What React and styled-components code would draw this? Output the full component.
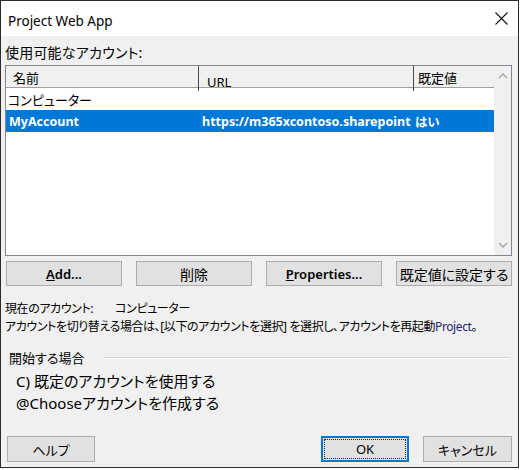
import styled, { createGlobalStyle } from 'styled-components';

const GlobalStyle = createGlobalStyle`
  html, body {
    margin: 0;
    padding: 0;
    background: #fff;
  }
  body {
    font-family: 'Noto Sans', 'Noto Sans CJK JP', sans-serif;
    font-feature-settings: 'palt';
    color: #000;
  }
  * {
    box-sizing: border-box;
  }
`;

const columns = '192px 215px 1fr';

const accounts = [
  { name: 'コンピューター', url: '', isDefault: '' },
  {
    name: 'MyAccount',
    url: 'https://m365xcontoso.sharepoint',
    isDefault: 'はい',
    selected: true,
  },
];

const Chevron = ({ up }) => (
  <svg width='10' height='6' viewBox='0 0 10 6'>
    <path
      d={up ? 'M1 5 L5 1 L9 5' : 'M1 1 L5 5 L9 1'}
      fill='none'
      stroke='#a6a6a6'
      strokeWidth='1.4'
    />
  </svg>
);

const App = () => {
  return (
    <>
      <GlobalStyle />
      <Window>
        <TitleBar>
          <Title>Project Web App</Title>
          <Close>
            <svg width='13' height='13' viewBox='0 0 13 13'>
              <path d='M0.5 0.5 L12.5 12.5 M12.5 0.5 L0.5 12.5' stroke='#111' strokeWidth='1.1' />
            </svg>
          </Close>
        </TitleBar>

        <Body>
          <SectionLabel>使用可能なアカウント:</SectionLabel>

          <ListBox>
            <ListMain>
              <HeaderRow>
                <HeaderCell $pl={7} $pt={3}>名前</HeaderCell>
                <HeaderCell $pl={8} $pt={7} $divider>URL</HeaderCell>
                <HeaderCell $pl={4} $pt={3} $divider>既定値</HeaderCell>
              </HeaderRow>
              {accounts.map((a) => (
                <Row key={a.name} $selected={a.selected}>
                  <Cell $pl={a.selected ? 3 : 2}>{a.name}</Cell>
                  <Cell $pl={4}>{a.url}</Cell>
                  <Cell $pl={2}>{a.isDefault}</Cell>
                </Row>
              ))}
            </ListMain>
            <ScrollBar>
              <Chevron up />
              <Chevron />
            </ScrollBar>
          </ListBox>

          <ButtonRow>
            <Button>
              <Latin>
                <u>A</u>dd...
              </Latin>
            </Button>
            <Button>削除</Button>
            <Button>
              <Latin>
                <u>P</u>roperties...
              </Latin>
            </Button>
            <Button>既定値に設定する</Button>
          </ButtonRow>

          <Info>
            <InfoLine>
              現在のアカウント:<Current>コンピューター</Current>
            </InfoLine>
            <InfoLine>
              アカウントを切り替える場合は、[以下のアカウントを選択] を選択し、アカウントを再起動
              <Product>Project</Product>。
            </InfoLine>
          </Info>

          <GroupHead>
            開始する場合
            <Etched />
          </GroupHead>

          <Options>
            <Option>C) 既定のアカウントを使用する</Option>
            <Option>@Chooseアカウントを作成する</Option>
          </Options>

          <Footer>
            <FooterButton>ヘルプ</FooterButton>
            <Spacer />
            <FooterButton $primary>OK</FooterButton>
            <FooterButton $wide>キャンセル</FooterButton>
          </Footer>
        </Body>
      </Window>
    </>
  );
};

export default App;

const Window = styled.div`
  width: 519px;
  height: 468px;
  border: 1px solid #2b2b2b;
  background: #f0f0f0;
  display: flex;
  flex-direction: column;
`;

const TitleBar = styled.div`
  height: 35px;
  background: #fff;
  display: flex;
  align-items: flex-start;
  justify-content: space-between;
  padding: 0 10px 0 7px;
`;

const Title = styled.div`
  padding-top: 10px;
  line-height: 20px;
  font-size: 13.5px;
`;

const Close = styled.div`
  margin-top: 11px;
  width: 13px;
  height: 13px;
  display: flex;
`;

const Body = styled.div`
  flex: 1;
  display: flex;
  flex-direction: column;
  padding: 0 6px 0 4px;
`;

const SectionLabel = styled.div`
  margin-top: 7px;
  line-height: 20px;
  font-size: 14px;
  letter-spacing: 0.2px;
`;

const ListBox = styled.div`
  margin-top: 2px;
  height: 191px;
  border: 1px solid #828790;
  background: #fff;
  display: grid;
  grid-template-columns: 1fr 17px;
`;

const ListMain = styled.div`
  display: flex;
  flex-direction: column;
`;

const HeaderRow = styled.div`
  display: grid;
  grid-template-columns: ${columns};
  height: 22px;
  background: #f0f0f0;
  border-bottom: 1px solid #a0a0a0;
`;

const HeaderCell = styled.div`
  padding-left: ${(p) => p.$pl}px;
  padding-top: ${(p) => p.$pt}px;
  line-height: 18px;
  font-size: 13px;
  border-left: ${(p) => (p.$divider ? '1px solid #4a4a4a' : 'none')};
`;

const Row = styled.div`
  display: grid;
  grid-template-columns: ${columns};
  height: 22px;
  align-items: center;
  font-size: ${(p) => (p.$selected ? '12.5px' : '13px')};
  background: ${(p) => (p.$selected ? '#0078d7' : 'transparent')};
  color: ${(p) => (p.$selected ? '#fff' : '#000')};
  font-weight: ${(p) => (p.$selected ? 700 : 400)};
`;

const Cell = styled.div`
  padding-left: ${(p) => p.$pl}px;
  white-space: nowrap;
  overflow: hidden;
`;

const ScrollBar = styled.div`
  background: #f0f0f0;
  display: flex;
  flex-direction: column;
  justify-content: space-between;
  align-items: center;
  padding: 7px 0 7px;
`;

const ButtonRow = styled.div`
  margin-top: 5px;
  padding-left: 1px;
  display: grid;
  grid-template-columns: repeat(4, 116px);
  gap: 14px;
`;

const Button = styled.button`
  height: 25px;
  padding: 0;
  background: #e1e1e1;
  border: 1px solid #adadad;
  font-family: inherit;
  font-feature-settings: 'palt';
  font-size: 14px;
  color: #000;
  white-space: nowrap;
  overflow: visible;
`;

const Latin = styled.span`
  font-size: 13px;
  font-weight: 600;
`;

const Info = styled.div`
  margin-top: 14px;
  font-size: 12px;
  line-height: 18px;
  letter-spacing: -0.4px;
`;

const InfoLine = styled.div`
  white-space: nowrap;
`;

const Current = styled.span`
  margin-left: 22px;
`;

const Product = styled.span`
  color: #1c2470;
`;

const GroupHead = styled.div`
  margin-top: 13px;
  padding-left: 4px;
  display: flex;
  align-items: center;
  font-size: 13px;
  line-height: 18px;
`;

const Etched = styled.div`
  flex: 1;
  margin: 0 2px 0 20px;
  border-top: 1px solid #d5d5d5;
  border-bottom: 1px solid #fff;
`;

const Options = styled.div`
  margin-top: 3px;
  padding-left: 11px;
  font-size: 15px;
  line-height: 22px;
`;

const Option = styled.div`
  white-space: nowrap;
`;

const Footer = styled.div`
  margin-top: 22px;
  padding-left: 2px;
  display: flex;
  gap: 14px;
`;

const Spacer = styled.div`
  flex: 1;
`;

const FooterButton = styled.button`
  width: ${(p) => (p.$wide ? '89px' : '88px')};
  height: 26px;
  padding: 0;
  background: #e1e1e1;
  border: ${(p) => (p.$primary ? '2px solid #0078d7' : '1px solid #adadad')};
  outline: ${(p) => (p.$primary ? '1px dotted #222' : 'none')};
  outline-offset: -4px;
  font-family: inherit;
  font-feature-settings: 'palt';
  font-size: 13px;
  color: #000;
`;
